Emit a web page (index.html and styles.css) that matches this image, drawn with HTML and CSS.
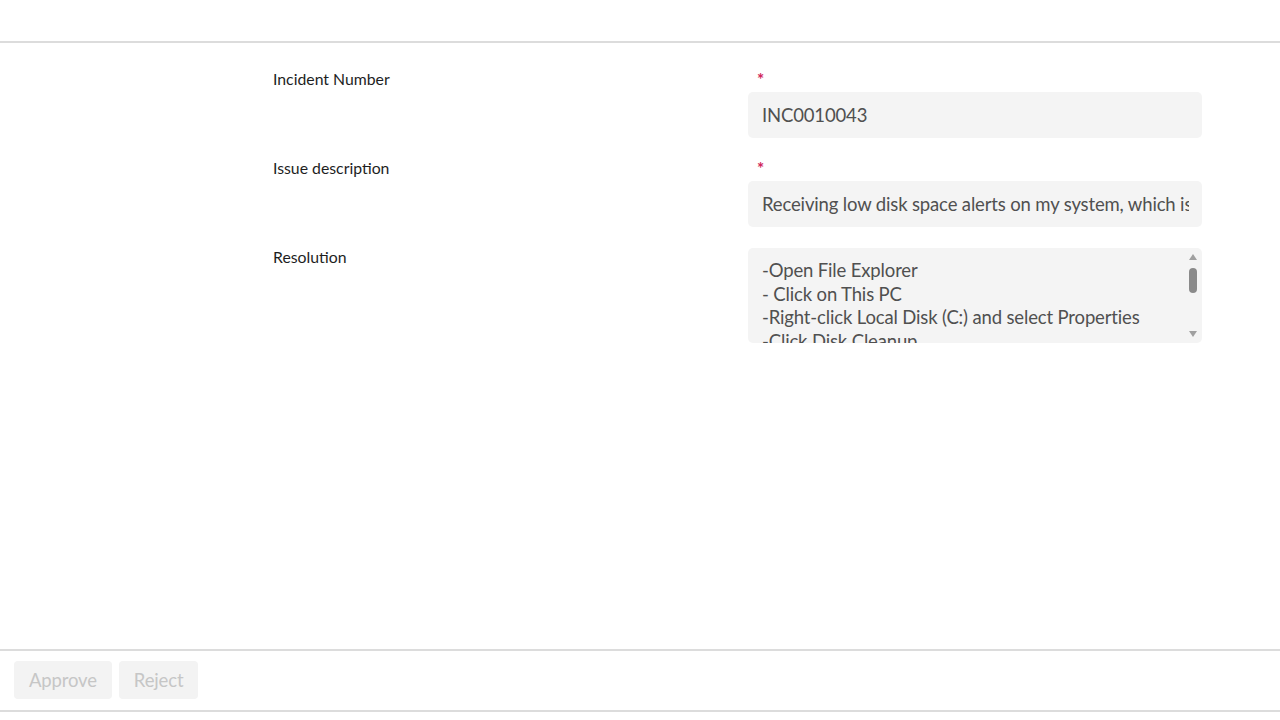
FILE: index.html
```html
<!DOCTYPE html>
<html lang="en">
<head>
  <meta charset="UTF-8">
  <title>Incident approval</title>
  <link rel="stylesheet" href="styles.css">
</head>
<body>
  <div class="topbar"></div>

  <div class="form">
    <div class="row">
      <div class="label">Incident Number</div>
      <div class="field">
        <div class="req">*</div>
        <div class="input"><span>INC0010043</span></div>
      </div>
    </div>
    <div class="row">
      <div class="label">Issue description</div>
      <div class="field">
        <div class="req">*</div>
        <div class="input"><span>Receiving low disk space alerts on my system, which is affecting performance</span></div>
      </div>
    </div>
    <div class="row">
      <div class="label">Resolution</div>
      <div class="field">
        <div class="textarea">
          <div class="lines">
            -Open File Explorer<br>
            - Click on This PC<br>
            -Right-click Local Disk (C:) and select Properties<br>
            -Click Disk Cleanup<br>
            -Select files to delete and click OK
          </div>
          <div class="scroll">
            <span class="arrow up"></span>
            <span class="thumb"></span>
            <span class="arrow down"></span>
          </div>
        </div>
      </div>
    </div>
  </div>

  <div class="footer">
    <button disabled>Approve</button>
    <button disabled>Reject</button>
  </div>
</body>
</html>
```

FILE: styles.css
```css
html, body { margin:0; padding:0; height:100%; }
body {
  display:flex; flex-direction:column;
  background:#fff;
  font-family:Lato, "Open Sans", sans-serif;
  color:#222;
}
.topbar { height:41px; border-bottom:2px solid #dcdcdc; }

.form {
  flex:1;
  padding:25px 0 0 273px;
}
.row {
  display:grid; grid-template-columns:475px 454px;
  margin-bottom:19px;
}
.label { font-size:15.8px; line-height:20px; color:#1e1e1e; padding-top:1px; }
.field { display:flex; flex-direction:column; }
.req {
  color:#d0245a; font-size:17px; font-weight:bold; line-height:20px;
  padding:2px 0 0 9px; margin-bottom:2px;
}
.input {
  height:46px; box-sizing:border-box;
  background:#f4f4f4; border-radius:5px;
  padding:0 13px 0 14px; line-height:46px;
  font-size:18.5px; letter-spacing:-0.15px; color:#505050;
}
.input span { display:block; white-space:nowrap; overflow:hidden; }
.textarea {
  position:relative;
  height:95px; box-sizing:border-box;
  background:#f4f4f4; border-radius:5px;
  margin-top:2px;
  padding:11px 30px 0 14px;
  overflow:hidden;
}
.lines {
  font-size:18.5px; letter-spacing:-0.15px; line-height:23.5px;
  color:#505050; white-space:nowrap;
}
.scroll {
  position:absolute; top:4px; right:4px; bottom:4px; width:10px;
}
.arrow {
  position:absolute; left:1px; width:0; height:0;
  border-left:4px solid transparent; border-right:4px solid transparent;
}
.arrow.up { top:2px; border-bottom:6px solid #a0a0a0; }
.arrow.down { bottom:2px; border-top:6px solid #a0a0a0; }
.thumb {
  position:absolute; left:1px; top:16px;
  width:8px; height:25px; border-radius:4px; background:#8a8a8a;
}

.footer {
  border-top:2px solid #dcdcdc; border-bottom:2px solid #dcdcdc;
  padding:10px 14px 11px;
  margin-bottom:8px;
  display:flex; gap:7px;
}
.footer button {
  font-family:inherit; font-size:18.5px; letter-spacing:-0.15px;
  background:#f3f3f3; color:#c6c6c6;
  border:none; border-radius:4px;
  height:38px; padding:0 15px;
}
```
